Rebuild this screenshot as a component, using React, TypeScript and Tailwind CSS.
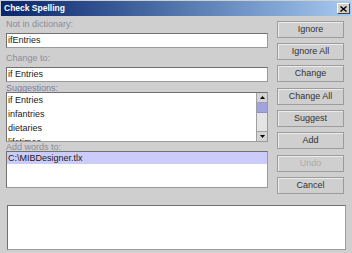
import React from 'react';

const labelCls = "h-[10px] leading-[10px] text-[#8c8c9a] whitespace-nowrap";
const fieldCls =
  "h-[15px] bg-white border border-[#9a9a9a] border-t-[#707070] border-l-[#707070] flex items-center pl-[1px] leading-[15px] text-[#1a1a1a]";

const buttons: { label: string; disabled?: boolean; mt: string }[] = [
  { label: 'Ignore', mt: 'mt-0' },
  { label: 'Ignore All', mt: 'mt-[5px]' },
  { label: 'Change', mt: 'mt-[5px]' },
  { label: 'Change All', mt: 'mt-[6px]' },
  { label: 'Suggest', mt: 'mt-[5px]' },
  { label: 'Add', mt: 'mt-[5px]' },
  { label: 'Undo', disabled: true, mt: 'mt-[6px]' },
  { label: 'Cancel', mt: 'mt-[5px]' },
];

const suggestions = ['if Entries', 'infantries', 'dietaries', 'lifetimes'];

function CloseBox() {
  return (
    <div className="w-[13px] h-[11px] bg-[#d4d0c8] border border-[#fff] border-r-[#404040] border-b-[#404040] flex items-center justify-center">
      <svg width="7" height="6" viewBox="0 0 7 6">
        <path d="M0.5 0.5 L6.5 5.5 M6.5 0.5 L0.5 5.5" stroke="#000" strokeWidth="1.4" />
      </svg>
    </div>
  );
}

function ScrollBar() {
  return (
    <div className="w-[11px] h-full flex flex-col border-l border-[#a0a0a0] bg-[#e4e4e4]">
      <div className="h-[10px] bg-[#d4d4d4] border-b border-[#a0a0a0] flex items-center justify-center">
        <svg width="5" height="3" viewBox="0 0 5 3">
          <path d="M0 3 L2.5 0 L5 3 Z" fill="#000" />
        </svg>
      </div>
      <div className="h-[10px] bg-[#b8b8ec] border-b border-[#9090c8] bg-[radial-gradient(#8888d0_0.6px,transparent_0.8px)] bg-[length:2px_2px]" />
      <div className="flex-1" />
      <div className="h-[10px] bg-[#d4d4d4] border-t border-[#a0a0a0] flex items-center justify-center">
        <svg width="5" height="3" viewBox="0 0 5 3">
          <path d="M0 0 L2.5 3 L5 0 Z" fill="#000" />
        </svg>
      </div>
    </div>
  );
}

export default function App() {
  return (
    <div className="w-[352px] h-[253px] bg-[#cfcfcf] flex flex-col overflow-hidden font-['Liberation_Sans',Arial,sans-serif] text-[9px] text-[#2a2a2a]">
      {/* Title bar */}
      <div className="h-[15px] mt-[1px] mx-[1px] bg-gradient-to-r from-[#0a246a] to-[#a6caf0] flex items-center justify-between pl-[3px] pr-[1px]">
        <span className="text-white font-bold text-[8.5px] leading-[15px]">Check Spelling</span>
        <CloseBox />
      </div>

      <div className="flex pt-[3px] pl-[6px]">
        {/* Left column */}
        <div className="w-[262px] flex flex-col">
          <div className={labelCls}>Not in dictionary:</div>
          <div className={`${fieldCls} mt-[4px]`}>ifEntries</div>

          <div className={`${labelCls} mt-[5px]`}>Change to:</div>
          <div className={`${fieldCls} mt-[4px]`}>if Entries</div>

          <div className="h-[9px] leading-[10px] mt-[1px] text-[#7c7ca8] whitespace-nowrap">Suggestions:</div>
          <div className="h-[50px] bg-white border border-[#9a9a9a] border-t-[#707070] border-l-[#707070] flex overflow-hidden">
            <div className="flex-1 flex flex-col pl-[1px] text-[#1a1a1a]">
              {suggestions.map((s) => (
                <div key={s} className="h-[14px] leading-[14px] shrink-0 whitespace-nowrap">{s}</div>
              ))}
            </div>
            <ScrollBar />
          </div>

          <div className="h-[9px] leading-[10px] text-[#8c8c9a] whitespace-nowrap">Add words to:</div>
          <div className="h-[37px] bg-white border border-[#9a9a9a] border-t-[#707070] border-l-[#707070] flex flex-col">
            <div className="h-[12px] leading-[12px] bg-[#ccccfa] pl-[1px] text-[#1a1a1a]">C:\MIBDesigner.tlx</div>
          </div>
        </div>

        {/* Buttons */}
        <div className="ml-[9px] mt-[2px] w-[67px] flex flex-col">
          {buttons.map((b) => (
            <div
              key={b.label}
              className={`${b.mt} h-[17px] border border-[#9c9c9c] shadow-[inset_1px_1px_0_#ececec] flex items-center justify-center leading-[15px] ${
                b.disabled ? 'text-[#ababab]' : 'text-[#333]'
              }`}
            >
              {b.label}
            </div>
          ))}
        </div>
      </div>

      {/* Message area */}
      <div className="mt-[11px] ml-[7px] w-[339px] h-[45px] bg-white border border-[#9a9a9a] border-t-[#707070] border-l-[#707070]" />
    </div>
  );
}
